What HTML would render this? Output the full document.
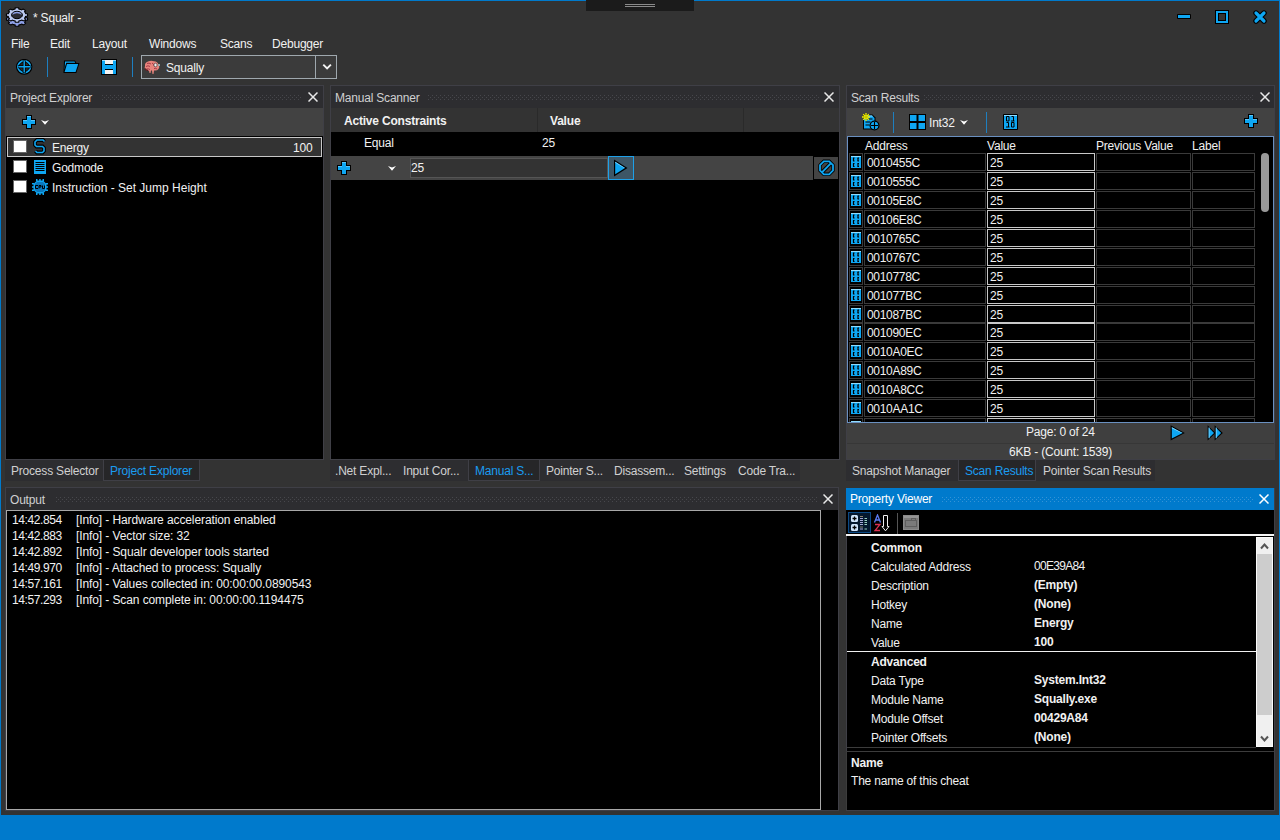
<!DOCTYPE html>
<html><head><meta charset="utf-8">
<style>
*{box-sizing:border-box}
html,body{margin:0;padding:0}
body{width:1280px;height:840px;background:#333333;position:relative;overflow:hidden;font-family:"Liberation Sans",sans-serif;font-size:12px;color:#f1f1f1}
.a{position:absolute}
.t{position:absolute;white-space:nowrap;line-height:16px;height:16px;letter-spacing:-0.2px}
.b{font-weight:bold}
.hdr{position:absolute;background:#2d2d30;height:22px}
.grip{position:absolute;height:5px;background-image:radial-gradient(circle,#46464a 0.8px,transparent 1px);background-size:4px 4px}
.x{position:absolute;width:10px;height:10px}
.blk{position:absolute;background:#000}
.cell{position:absolute;border:1px solid #3a3a3a;height:18px}
.vcell{position:absolute;border:1px solid #c8c8c8;height:18px}
.ts{letter-spacing:-0.4px}
.hx{letter-spacing:-0.3px}
.tabs{position:absolute;height:21px;background:#2d2d30}
</style></head>
<body>
<svg width="0" height="0" style="position:absolute"><defs>
<pattern id="gp" width="4" height="4" patternUnits="userSpaceOnUse"><rect x="0" y="0" width="1" height="1" fill="#47474c"/><rect x="2" y="2" width="1" height="1" fill="#47474c"/></pattern>
<pattern id="gpb" width="4" height="4" patternUnits="userSpaceOnUse"><rect x="0" y="0" width="1" height="1" fill="#3593d6"/><rect x="2" y="2" width="1" height="1" fill="#3593d6"/></pattern>
</defs></svg>
<!-- window border -->
<div class="a" style="left:0;top:0;width:1280px;height:1px;background:#007acc"></div>
<div class="a" style="left:0;top:0;width:1px;height:815px;background:#007acc"></div>
<div class="a" style="left:1279px;top:0;width:1px;height:815px;background:#007acc"></div>
<div class="a" style="left:0;top:815px;width:1280px;height:25px;background:#007acc"></div>
<!-- grip -->
<div class="a" style="left:586px;top:0;width:108px;height:11px;background:#1b1b1b"></div>
<div class="a" style="left:625px;top:4px;width:30px;height:1px;background:#8a8a8a"></div>
<div class="a" style="left:625px;top:6px;width:30px;height:1px;background:#8a8a8a"></div>

<!-- title -->
<svg class="a" style="left:0px;top:0px" width="32" height="32" viewBox="0 0 32 32">
<g transform="translate(0,4)"><polygon points="15.14,7.91 15.65,7.86 16.17,7.82 16.69,7.80 17.21,7.80 17.73,7.82 18.25,7.85 18.76,7.90 18.91,9.09 19.33,9.16 19.75,9.25 20.16,9.35 20.57,9.46 20.96,9.58 21.35,9.72 21.73,9.87 23.06,9.09 23.48,9.30 23.88,9.53 24.27,9.76 24.64,10.01 24.99,10.27 25.32,10.54 25.64,10.83 24.50,11.74 24.73,11.99 24.93,12.25 25.12,12.52 25.29,12.80 25.44,13.07 25.57,13.36 25.68,13.65 27.43,13.73 27.51,14.08 27.57,14.44 27.60,14.79 27.60,15.14 27.57,15.49 27.53,15.85 27.45,16.20 25.70,16.30 25.59,16.58 25.47,16.87 25.32,17.15 25.16,17.42 24.97,17.69 24.77,17.96 24.55,18.21 25.70,19.12 25.39,19.40 25.06,19.68 24.71,19.94 24.35,20.19 23.96,20.43 23.56,20.65 23.15,20.87 21.80,20.09 21.43,20.25 21.04,20.39 20.65,20.52 20.25,20.63 19.83,20.73 19.42,20.82 18.99,20.89 18.86,22.09 18.35,22.14 17.83,22.18 17.31,22.20 16.79,22.20 16.27,22.18 15.75,22.15 15.24,22.10 15.09,20.91 14.67,20.84 14.25,20.75 13.84,20.65 13.43,20.54 13.04,20.42 12.65,20.28 12.27,20.13 10.94,20.91 10.52,20.70 10.12,20.47 9.73,20.24 9.36,19.99 9.01,19.73 8.68,19.46 8.36,19.17 9.50,18.26 9.27,18.01 9.07,17.75 8.88,17.48 8.71,17.20 8.56,16.93 8.43,16.64 8.32,16.35 6.57,16.27 6.49,15.92 6.43,15.56 6.40,15.21 6.40,14.86 6.43,14.51 6.47,14.15 6.55,13.80 8.30,13.70 8.41,13.42 8.53,13.13 8.68,12.85 8.84,12.58 9.03,12.31 9.23,12.04 9.45,11.79 8.30,10.88 8.61,10.60 8.94,10.32 9.29,10.06 9.65,9.81 10.04,9.57 10.44,9.35 10.85,9.13 12.20,9.91 12.57,9.75 12.96,9.61 13.35,9.48 13.75,9.37 14.17,9.27 14.58,9.18 15.01,9.11" fill="#8d9fe6" stroke="#000" stroke-width="1.1" stroke-linejoin="round"/></g>
<polygon points="15.14,7.91 15.65,7.86 16.17,7.82 16.69,7.80 17.21,7.80 17.73,7.82 18.25,7.85 18.76,7.90 18.91,9.09 19.33,9.16 19.75,9.25 20.16,9.35 20.57,9.46 20.96,9.58 21.35,9.72 21.73,9.87 23.06,9.09 23.48,9.30 23.88,9.53 24.27,9.76 24.64,10.01 24.99,10.27 25.32,10.54 25.64,10.83 24.50,11.74 24.73,11.99 24.93,12.25 25.12,12.52 25.29,12.80 25.44,13.07 25.57,13.36 25.68,13.65 27.43,13.73 27.51,14.08 27.57,14.44 27.60,14.79 27.60,15.14 27.57,15.49 27.53,15.85 27.45,16.20 25.70,16.30 25.59,16.58 25.47,16.87 25.32,17.15 25.16,17.42 24.97,17.69 24.77,17.96 24.55,18.21 25.70,19.12 25.39,19.40 25.06,19.68 24.71,19.94 24.35,20.19 23.96,20.43 23.56,20.65 23.15,20.87 21.80,20.09 21.43,20.25 21.04,20.39 20.65,20.52 20.25,20.63 19.83,20.73 19.42,20.82 18.99,20.89 18.86,22.09 18.35,22.14 17.83,22.18 17.31,22.20 16.79,22.20 16.27,22.18 15.75,22.15 15.24,22.10 15.09,20.91 14.67,20.84 14.25,20.75 13.84,20.65 13.43,20.54 13.04,20.42 12.65,20.28 12.27,20.13 10.94,20.91 10.52,20.70 10.12,20.47 9.73,20.24 9.36,19.99 9.01,19.73 8.68,19.46 8.36,19.17 9.50,18.26 9.27,18.01 9.07,17.75 8.88,17.48 8.71,17.20 8.56,16.93 8.43,16.64 8.32,16.35 6.57,16.27 6.49,15.92 6.43,15.56 6.40,15.21 6.40,14.86 6.43,14.51 6.47,14.15 6.55,13.80 8.30,13.70 8.41,13.42 8.53,13.13 8.68,12.85 8.84,12.58 9.03,12.31 9.23,12.04 9.45,11.79 8.30,10.88 8.61,10.60 8.94,10.32 9.29,10.06 9.65,9.81 10.04,9.57 10.44,9.35 10.85,9.13 12.20,9.91 12.57,9.75 12.96,9.61 13.35,9.48 13.75,9.37 14.17,9.27 14.58,9.18 15.01,9.11" fill="#bccaf2" stroke="#000" stroke-width="1.1" stroke-linejoin="round"/>
<ellipse cx="17" cy="15" rx="5.4" ry="3.7" fill="#2a2a33" stroke="#000" stroke-width="1"/>
<path d="M12.3 15Q12.8 11.8 17 11.7Q21.2 11.8 21.7 15Q20 13.3 17 13.3Q14 13.3 12.3 15z" fill="#8d9fe6"/>
</svg>
<div class="t" style="left:33px;top:10px">* Squalr -</div>
<!-- window buttons -->
<div class="a" style="left:1177px;top:14px;width:14px;height:5px;background:#000;border-radius:1px"></div>
<div class="a" style="left:1178px;top:15px;width:12px;height:3px;background:#0ea6f2"></div>
<div class="a" style="left:1215px;top:10px;width:14px;height:14px;border:1px solid #000;background:#000"></div>
<div class="a" style="left:1216px;top:11px;width:12px;height:12px;border:2px solid #0ea6f2;background:transparent"></div>
<div class="a" style="left:1218px;top:13px;width:8px;height:8px;border:1px solid #000;background:#333"></div>
<svg class="a" style="left:1253px;top:10px" width="14" height="14" viewBox="0 0 14 14">
<path d="M3 3L11 11M11 3L3 11" stroke="#000" stroke-width="5.4" stroke-linecap="round"/>
<path d="M3 3L11 11M11 3L3 11" stroke="#0ea6f2" stroke-width="3.2" stroke-linecap="round"/>
</svg>

<!-- menu -->
<div class="t" style="left:11px;top:36px">File</div>
<div class="t" style="left:50px;top:36px">Edit</div>
<div class="t" style="left:92px;top:36px">Layout</div>
<div class="t" style="left:149px;top:36px">Windows</div>
<div class="t" style="left:220px;top:36px">Scans</div>
<div class="t" style="left:272px;top:36px">Debugger</div>

<!-- toolbar -->
<svg class="a" style="left:16px;top:59px" width="17" height="16" viewBox="0 0 17 16">
<ellipse cx="8.2" cy="7.8" rx="7.6" ry="7.3" fill="#2a2a2a" stroke="#000" stroke-width="1.2"/>
<ellipse cx="8.2" cy="7.8" rx="6.2" ry="5.9" fill="none" stroke="#0ea6f2" stroke-width="1.8"/>
<ellipse cx="8.2" cy="7.8" rx="5" ry="4.7" fill="none" stroke="#000" stroke-width="0.8"/>
<path d="M8.2 1.5V14M2 7.8H14.5" stroke="#000" stroke-width="3"/>
<path d="M8.2 2V13.6M2.3 7.8H14.1" stroke="#0ea6f2" stroke-width="1.4"/>
</svg>
<div class="a" style="left:47px;top:57px;width:1px;height:20px;background:#1e7fc0"></div>
<svg class="a" style="left:63px;top:60px" width="17" height="14" viewBox="0 0 17 14">
<path d="M1 0.5h11l1.5 2.5H4L1.5 12.5H0.5z" fill="#000"/>
<path d="M2 1.5h9.5l0.8 1.3H3.3L1.6 10z" fill="#0ea6f2"/>
<path d="M3.2 3h13.3l-3.2 10H0.5z" fill="#000"/>
<path d="M4 4h11.2l-2.6 8H1.6z" fill="#0ea6f2"/>
</svg>
<svg class="a" style="left:101px;top:59px" width="16" height="16" viewBox="0 0 16 16" shape-rendering="crispEdges">
<rect x="0" y="0" width="16" height="16" fill="#000"/>
<rect x="1" y="1" width="14" height="14" fill="#0ea6f2"/>
<rect x="4" y="1" width="8" height="4" fill="#f4f4f4"/>
<rect x="4" y="5" width="8" height="1" fill="#000"/>
<rect x="4" y="10" width="8" height="1" fill="#000"/>
<rect x="4" y="11" width="8" height="4" fill="#f4f4f4"/>
<rect x="1" y="1" width="3" height="1" fill="#8fdcff"/><rect x="12" y="1" width="3" height="1" fill="#8fdcff"/>
</svg>
<div class="a" style="left:132px;top:57px;width:1px;height:20px;background:#1e7fc0"></div>
<div class="a" style="left:141px;top:55px;width:196px;height:24px;border:1px solid #9fa8ae;background:#3b3b3b"></div>
<div class="a" style="left:315px;top:56px;width:1px;height:22px;background:#9fa8ae"></div>
<svg class="a" style="left:143px;top:60px" width="18" height="15" viewBox="0 0 18 15">
<path d="M2 6Q1.5 2.5 5 1.5Q8 0 11 1.2Q14.5 1.5 15.5 4.5Q17 6.5 15.5 9Q14 11 11 10.5L10.5 14H9.5L9 10.5L8 10.5L7.5 13H6.5L6 10.5Q3.5 11 2.5 9.5Q1 8 2 6z" fill="#e8847c"/>
<path d="M3 6.5Q5 5 7 6.5M4 3.5Q6 2.5 8 4M9 3Q11 4 11.5 6.5M3.5 9Q5.5 8.5 7 9.5M11 8.5Q13 8 14 9" stroke="#a83a4a" stroke-width="1" fill="none"/>
<path d="M2 8.5Q3 10.5 5 10.5" stroke="#5a1a20" stroke-width="1.5" fill="none"/>
<ellipse cx="12.5" cy="5" rx="1.6" ry="1.8" fill="#f0f0f0" stroke="#333" stroke-width="0.6"/>
<rect x="15" y="4" width="2" height="2" fill="#9aa"/>
</svg>
<div class="t" style="left:166px;top:60px">Squally</div>
<svg class="a" style="left:322px;top:63px" width="11" height="8" viewBox="0 0 11 8"><path d="M1.3 1.6L5.1 5.4L8.9 1.6" stroke="#f4f4f4" stroke-width="1.9" fill="none"/></svg>

<!-- ============ PROJECT EXPLORER ============ -->
<div class="a" style="left:5px;top:85px;width:319px;height:375px;border:1px solid #3f3f46;border-bottom:none;background:#000"></div>
<div class="hdr" style="left:6px;top:86px;width:317px"></div>
<div class="t" style="left:10px;top:90px;color:#d0d0d0">Project Explorer</div>
<svg class="a" style="left:102px;top:95px" width="200" height="5"><rect width="200" height="5" fill="url(#gp)"/></svg>
<svg class="x" style="left:308px;top:92px" viewBox="0 0 10 10"><path d="M0.5 0.5L9.5 9.5M9.5 0.5L0.5 9.5" stroke="#e8e8e8" stroke-width="1.5"/></svg>
<div class="a" style="left:6px;top:108px;width:317px;height:28px;background:#424242"></div>
<svg class="a" style="left:22px;top:115px" width="14" height="14" viewBox="0 0 14 14">
<path d="M4 0h6v4h4v6h-4v4H4v-4H0V4h4z" fill="#000"/>
<path d="M5 1h4v4h4v4H9v4H5V9H1V5h4z" fill="#0ea6f2"/>
<path d="M5 1h4v0.8H5zM1 5h4v0.8H1zM9 5h4v0.8H9z" fill="#6fd0ff"/>
</svg>
<svg class="a" style="left:41px;top:120px" width="8" height="5" viewBox="0 0 8 5"><path d="M0 0L4 1.6L8 0L4 4.8z" fill="#fff"/></svg>

<div class="a" style="left:7px;top:137px;width:315px;height:20px;border:1px solid #c8c8c8;background:#333"></div>
<div class="a" style="left:13px;top:140px;width:14px;height:13px;background:#fff;border:1px solid #666"></div>
<div class="a" style="left:13px;top:160px;width:14px;height:13px;background:#fff;border:1px solid #666"></div>
<div class="a" style="left:13px;top:180px;width:14px;height:13px;background:#fff;border:1px solid #666"></div>
<svg class="a" style="left:33px;top:138px" width="14" height="18" viewBox="0 0 14 18">
<path d="M11.5 3.5L10 2H4L2 4V7L3.5 8.5H9.5L11 10V13L9.5 14.5H4L2.5 13" stroke="#000" stroke-width="3.8" fill="none" stroke-linejoin="miter"/>
<path d="M11.5 3.5L10 2H4L2 4V7L3.5 8.5H9.5L11 10V13L9.5 14.5H4L2.5 13" stroke="#0ea6f2" stroke-width="1.6" fill="none"/>
</svg>
<div class="t" style="left:52px;top:140px">Energy</div>
<div class="t" style="left:293px;top:140px">100</div>
<svg class="a" style="left:34px;top:160px" width="12" height="14" viewBox="0 0 12 14">
<rect x="0" y="0" width="12" height="14" fill="#0ea6f2"/>
<path d="M1.5 2.5h9M1.5 4.5h9M1.5 6.5h9M1.5 8.5h9M1.5 10.5h9" stroke="#000" stroke-width="1"/>
</svg>
<div class="t" style="left:52px;top:160px">Godmode</div>
<svg class="a" style="left:32px;top:179px" width="16" height="16" viewBox="0 0 16 16">
<path d="M4 0h1.5v2H4zM7.2 0h1.5v2H7.2zM10.5 0H12v2h-1.5zM4 14h1.5v2H4zM7.2 14h1.5v2H7.2zM10.5 14H12v2h-1.5zM0 4h2v1.5H0zM0 7.2h2v1.5H0zM0 10.5h2V12H0zM14 4h2v1.5h-2zM14 7.2h2v1.5h-2zM14 10.5h2V12h-2z" fill="#0ea6f2"/>
<path d="M5 1.5h6L14.5 5v6L11 14.5H5L1.5 11V5z" fill="#0ea6f2"/>
<path d="M5 3h6L13 5v6L11 13H5L3 11V5z" fill="#0a78bd"/>
<path d="M3.5 6.5h2.5M3.5 6.5v3h2.5M7 9.5v-3h2v1.5H7M10.5 6.5v3h2v-3" stroke="#000" stroke-width="1" fill="none"/>
</svg>
<div class="t" style="left:52px;top:180px;letter-spacing:0">Instruction - Set Jump Height</div>

<!-- tabs left -->
<div class="a" style="left:5px;top:459px;width:319px;height:1px;background:#3f3f46"></div>
<div class="tabs" style="left:5px;top:460px;width:98px"></div>
<div class="a" style="left:103px;top:460px;width:97px;height:21px;background:#262628;border:1px solid #3f3f46;border-top:none"></div>
<div class="t" style="left:11px;top:463px;color:#d0d0d0">Process Selector</div>
<div class="t" style="left:110px;top:463px;color:#1a9cf0">Project Explorer</div>

<!-- ============ MANUAL SCANNER ============ -->
<div class="a" style="left:330px;top:85px;width:510px;height:375px;border:1px solid #3f3f46;border-bottom:none;background:#000"></div>
<div class="hdr" style="left:331px;top:86px;width:508px"></div>
<div class="t" style="left:335px;top:90px;color:#d0d0d0">Manual Scanner</div>
<svg class="a" style="left:428px;top:95px" width="391" height="5"><rect width="391" height="5" fill="url(#gp)"/></svg>
<svg class="x" style="left:824px;top:92px" viewBox="0 0 10 10"><path d="M0.5 0.5L9.5 9.5M9.5 0.5L0.5 9.5" stroke="#e8e8e8" stroke-width="1.5"/></svg>
<div class="a" style="left:331px;top:108px;width:508px;height:24px;background:#333"></div>
<div class="a" style="left:537px;top:108px;width:1px;height:24px;background:#2a2a2a"></div>
<div class="a" style="left:743px;top:108px;width:1px;height:24px;background:#2a2a2a"></div>
<div class="t b" style="left:344px;top:113px">Active Constraints</div>
<div class="t b" style="left:550px;top:113px">Value</div>
<div class="t" style="left:364px;top:135px">Equal</div>
<div class="t" style="left:542px;top:135px">25</div>
<div class="a" style="left:331px;top:156px;width:482px;height:24px;background:#444"></div>
<svg class="a" style="left:337px;top:161px" width="14" height="14" viewBox="0 0 14 14">
<path d="M4 0h6v4h4v6h-4v4H4v-4H0V4h4z" fill="#000"/>
<path d="M5 1h4v4h4v4H9v4H5V9H1V5h4z" fill="#0ea6f2"/>
<path d="M5 1h4v0.8H5zM1 5h4v0.8H1zM9 5h4v0.8H9z" fill="#6fd0ff"/>
</svg>
<svg class="a" style="left:388px;top:166px" width="8" height="5" viewBox="0 0 8 5"><path d="M0 0L4 1.6L8 0L4 4.8z" fill="#fff"/></svg>
<div class="a" style="left:410px;top:158px;width:198px;height:20px;background:#333;border:1px solid #555"></div>
<div class="t" style="left:411px;top:160px">25</div>
<div class="a" style="left:608px;top:156px;width:26px;height:24px;background:#3d5666;border:1px solid #1ea0e8"></div>
<svg class="a" style="left:612px;top:159px" width="18" height="18" viewBox="0 0 18 18">
<path d="M2 0.5L15.5 9L2 17.5z" fill="#000"/>
<path d="M3.2 2.8L13 9L3.2 15.2z" fill="#0ea6f2"/>
<path d="M3.2 2.8L13 9L12 9L3.2 3.8z" fill="#7fd6ff"/>
</svg>
<div class="a" style="left:814px;top:157px;width:24px;height:22px;background:#444"></div>
<svg class="a" style="left:817px;top:159px" width="19" height="18" viewBox="0 0 19 18">
<path d="M6.8 2.3H12.2L16 6.1V11.5L12.2 15.3H6.8L3 11.5V6.1z" fill="none" stroke="#000" stroke-width="3.4"/>
<path d="M5.2 13.2L13.8 4.4" stroke="#000" stroke-width="3.8"/>
<path d="M6.8 2.3H12.2L16 6.1V11.5L12.2 15.3H6.8L3 11.5V6.1z" fill="none" stroke="#0ea6f2" stroke-width="1.8"/>
<path d="M5.2 13.2L13.8 4.4" stroke="#0ea6f2" stroke-width="1.9"/>
</svg>

<!-- tabs manual -->
<div class="a" style="left:330px;top:459px;width:510px;height:1px;background:#3f3f46"></div>
<div class="tabs" style="left:330px;top:460px;width:470px"></div>
<div class="a" style="left:468px;top:460px;width:72px;height:21px;background:#262628;border:1px solid #3f3f46;border-top:none"></div>
<div class="t" style="left:335px;top:463px;color:#d0d0d0">.Net Expl...</div>
<div class="t" style="left:403px;top:463px;color:#d0d0d0">Input Cor...</div>
<div class="t" style="left:475px;top:463px;color:#1a9cf0">Manual S...</div>
<div class="t" style="left:546px;top:463px;color:#d0d0d0">Pointer S...</div>
<div class="t" style="left:614px;top:463px;color:#d0d0d0">Disassem...</div>
<div class="t" style="left:684px;top:463px;color:#d0d0d0">Settings</div>
<div class="t" style="left:738px;top:463px;color:#d0d0d0">Code Tra...</div>

<!-- ============ SCAN RESULTS ============ -->
<div class="a" style="left:846px;top:85px;width:429px;height:375px;border:1px solid #3f3f46;border-bottom:none;background:#333"></div>
<div class="hdr" style="left:847px;top:86px;width:427px"></div>
<div class="t" style="left:851px;top:90px;color:#d0d0d0">Scan Results</div>
<svg class="a" style="left:924px;top:95px" width="329" height="5"><rect width="329" height="5" fill="url(#gp)"/></svg>
<svg class="x" style="left:1260px;top:92px" viewBox="0 0 10 10"><path d="M0.5 0.5L9.5 9.5M9.5 0.5L0.5 9.5" stroke="#e8e8e8" stroke-width="1.5"/></svg>
<div class="a" style="left:847px;top:108px;width:427px;height:28px;background:#424242"></div>
<svg class="a" style="left:860px;top:111px" width="21" height="21" viewBox="0 0 21 21">
<path d="M3 3.5h9.5l3 3V18.5H3z" fill="#000"/>
<path d="M4 4.5h8l2.5 2.5V17.5H4z" fill="#0ea6f2"/>
<path d="M4 4.5h8l1 1H4z" fill="#8fdcff"/>
<path d="M5.5 8h7M5.5 11h5M5.5 14h4" stroke="#000" stroke-width="1.2"/>
<circle cx="14.5" cy="14.5" r="5" fill="#000"/>
<circle cx="14.5" cy="14.5" r="3.8" fill="#0ea6f2"/>
<path d="M11 14.5h7M14.5 11v7" stroke="#000" stroke-width="1.1"/>
<path d="M6 2v8M2 6h8M3.2 3.2l5.6 5.6M8.8 3.2l-5.6 5.6" stroke="#f2f000" stroke-width="1.3"/>
<circle cx="6" cy="6" r="1.8" fill="#c8c800"/>
</svg>
<div class="a" style="left:893px;top:112px;width:1px;height:21px;background:#1e7fc0"></div>
<svg class="a" style="left:909px;top:114px" width="17" height="16" viewBox="0 0 17 16">
<rect x="0" y="0" width="17" height="16" fill="#000"/>
<rect x="1" y="1" width="6.5" height="6" fill="#0ea6f2"/><rect x="9.5" y="1" width="6.5" height="6" fill="#0ea6f2"/>
<rect x="1" y="9" width="6.5" height="6" fill="#0ea6f2"/><rect x="9.5" y="9" width="6.5" height="6" fill="#0ea6f2"/>
</svg>
<div class="t" style="left:929px;top:115px">Int32</div>
<svg class="a" style="left:960px;top:120px" width="8" height="5" viewBox="0 0 8 5"><path d="M0 0L4 1.6L8 0L4 4.8z" fill="#fff"/></svg>
<div class="a" style="left:986px;top:112px;width:1px;height:21px;background:#1e7fc0"></div>
<svg class="a" style="left:1003px;top:114px" width="15" height="16" viewBox="0 0 15 16">
<rect x="0" y="0" width="15" height="16" rx="1" fill="#000"/>
<rect x="1" y="1" width="13" height="14" fill="#0ea6f2"/>
<rect x="1" y="1" width="13" height="1" fill="#8fdcff"/>
<path d="M3.5 2.5h2.5v4.5H3.5z" fill="none" stroke="#000" stroke-width="1"/>
<path d="M8.5 2.5h2v4.5M8 7h3.5" fill="none" stroke="#000" stroke-width="1"/>
<path d="M3.5 8.5h2v4.5M3 13h3.5" fill="none" stroke="#000" stroke-width="1"/>
<path d="M8.5 8.5h2.5v4.5H8.5z" fill="none" stroke="#000" stroke-width="1"/>
</svg>
<svg class="a" style="left:1244px;top:114px" width="14" height="14" viewBox="0 0 14 14">
<path d="M4 0h6v4h4v6h-4v4H4v-4H0V4h4z" fill="#000"/>
<path d="M5 1h4v4h4v4H9v4H5V9H1V5h4z" fill="#0ea6f2"/>
<path d="M5 1h4v0.8H5zM1 5h4v0.8H1zM9 5h4v0.8H9z" fill="#6fd0ff"/>
</svg>

<div class="a" style="left:847px;top:136px;width:427px;height:287px;border:1px solid #6a90c0;background:#000"></div>
<div class="t" style="left:865px;top:138px">Address</div>
<div class="t" style="left:987px;top:138px">Value</div>
<div class="t" style="left:1096px;top:138px">Previous Value</div>
<div class="t" style="left:1192px;top:138px">Label</div>
<div style="position:absolute;left:0;top:0;width:1274px;height:422px;overflow:hidden">
<div class="cell" style="left:849px;top:153px;width:14px"></div>
<svg class="a" style="left:851px;top:156px" width="10" height="12" viewBox="0 0 10 12"><rect width="10" height="12" fill="#0ea6f2"/><rect width="10" height="1" fill="#8fdcff"/><path d="M2.5 2v3M7 2v3M2.5 7.5v3M7 7.5v3" stroke="#000" stroke-width="1.2"/><path d="M2 2h1.5M6.5 2h1.5M2 5h1.5M6.5 5h1.5M2 7.5h1.5M6.5 7.5h1.5M2 10.5h1.5M6.5 10.5h1.5" stroke="#000" stroke-width="1"/></svg>
<div class="cell" style="left:864px;top:153px;width:122px"></div>
<div class="vcell" style="left:987px;top:153px;width:108px"></div>
<div class="cell" style="left:1096px;top:153px;width:95px"></div>
<div class="cell" style="left:1192px;top:153px;width:63px"></div>
<div class="t hx" style="left:867px;top:155px">0010455C</div><div class="t" style="left:990px;top:155px">25</div>
<div class="cell" style="left:849px;top:172px;width:14px"></div>
<svg class="a" style="left:851px;top:175px" width="10" height="12" viewBox="0 0 10 12"><rect width="10" height="12" fill="#0ea6f2"/><rect width="10" height="1" fill="#8fdcff"/><path d="M2.5 2v3M7 2v3M2.5 7.5v3M7 7.5v3" stroke="#000" stroke-width="1.2"/><path d="M2 2h1.5M6.5 2h1.5M2 5h1.5M6.5 5h1.5M2 7.5h1.5M6.5 7.5h1.5M2 10.5h1.5M6.5 10.5h1.5" stroke="#000" stroke-width="1"/></svg>
<div class="cell" style="left:864px;top:172px;width:122px"></div>
<div class="vcell" style="left:987px;top:172px;width:108px"></div>
<div class="cell" style="left:1096px;top:172px;width:95px"></div>
<div class="cell" style="left:1192px;top:172px;width:63px"></div>
<div class="t hx" style="left:867px;top:174px">0010555C</div><div class="t" style="left:990px;top:174px">25</div>
<div class="cell" style="left:849px;top:191px;width:14px"></div>
<svg class="a" style="left:851px;top:194px" width="10" height="12" viewBox="0 0 10 12"><rect width="10" height="12" fill="#0ea6f2"/><rect width="10" height="1" fill="#8fdcff"/><path d="M2.5 2v3M7 2v3M2.5 7.5v3M7 7.5v3" stroke="#000" stroke-width="1.2"/><path d="M2 2h1.5M6.5 2h1.5M2 5h1.5M6.5 5h1.5M2 7.5h1.5M6.5 7.5h1.5M2 10.5h1.5M6.5 10.5h1.5" stroke="#000" stroke-width="1"/></svg>
<div class="cell" style="left:864px;top:191px;width:122px"></div>
<div class="vcell" style="left:987px;top:191px;width:108px"></div>
<div class="cell" style="left:1096px;top:191px;width:95px"></div>
<div class="cell" style="left:1192px;top:191px;width:63px"></div>
<div class="t hx" style="left:867px;top:193px">00105E8C</div><div class="t" style="left:990px;top:193px">25</div>
<div class="cell" style="left:849px;top:210px;width:14px"></div>
<svg class="a" style="left:851px;top:213px" width="10" height="12" viewBox="0 0 10 12"><rect width="10" height="12" fill="#0ea6f2"/><rect width="10" height="1" fill="#8fdcff"/><path d="M2.5 2v3M7 2v3M2.5 7.5v3M7 7.5v3" stroke="#000" stroke-width="1.2"/><path d="M2 2h1.5M6.5 2h1.5M2 5h1.5M6.5 5h1.5M2 7.5h1.5M6.5 7.5h1.5M2 10.5h1.5M6.5 10.5h1.5" stroke="#000" stroke-width="1"/></svg>
<div class="cell" style="left:864px;top:210px;width:122px"></div>
<div class="vcell" style="left:987px;top:210px;width:108px"></div>
<div class="cell" style="left:1096px;top:210px;width:95px"></div>
<div class="cell" style="left:1192px;top:210px;width:63px"></div>
<div class="t hx" style="left:867px;top:212px">00106E8C</div><div class="t" style="left:990px;top:212px">25</div>
<div class="cell" style="left:849px;top:229px;width:14px"></div>
<svg class="a" style="left:851px;top:232px" width="10" height="12" viewBox="0 0 10 12"><rect width="10" height="12" fill="#0ea6f2"/><rect width="10" height="1" fill="#8fdcff"/><path d="M2.5 2v3M7 2v3M2.5 7.5v3M7 7.5v3" stroke="#000" stroke-width="1.2"/><path d="M2 2h1.5M6.5 2h1.5M2 5h1.5M6.5 5h1.5M2 7.5h1.5M6.5 7.5h1.5M2 10.5h1.5M6.5 10.5h1.5" stroke="#000" stroke-width="1"/></svg>
<div class="cell" style="left:864px;top:229px;width:122px"></div>
<div class="vcell" style="left:987px;top:229px;width:108px"></div>
<div class="cell" style="left:1096px;top:229px;width:95px"></div>
<div class="cell" style="left:1192px;top:229px;width:63px"></div>
<div class="t hx" style="left:867px;top:231px">0010765C</div><div class="t" style="left:990px;top:231px">25</div>
<div class="cell" style="left:849px;top:248px;width:14px"></div>
<svg class="a" style="left:851px;top:251px" width="10" height="12" viewBox="0 0 10 12"><rect width="10" height="12" fill="#0ea6f2"/><rect width="10" height="1" fill="#8fdcff"/><path d="M2.5 2v3M7 2v3M2.5 7.5v3M7 7.5v3" stroke="#000" stroke-width="1.2"/><path d="M2 2h1.5M6.5 2h1.5M2 5h1.5M6.5 5h1.5M2 7.5h1.5M6.5 7.5h1.5M2 10.5h1.5M6.5 10.5h1.5" stroke="#000" stroke-width="1"/></svg>
<div class="cell" style="left:864px;top:248px;width:122px"></div>
<div class="vcell" style="left:987px;top:248px;width:108px"></div>
<div class="cell" style="left:1096px;top:248px;width:95px"></div>
<div class="cell" style="left:1192px;top:248px;width:63px"></div>
<div class="t hx" style="left:867px;top:250px">0010767C</div><div class="t" style="left:990px;top:250px">25</div>
<div class="cell" style="left:849px;top:267px;width:14px"></div>
<svg class="a" style="left:851px;top:270px" width="10" height="12" viewBox="0 0 10 12"><rect width="10" height="12" fill="#0ea6f2"/><rect width="10" height="1" fill="#8fdcff"/><path d="M2.5 2v3M7 2v3M2.5 7.5v3M7 7.5v3" stroke="#000" stroke-width="1.2"/><path d="M2 2h1.5M6.5 2h1.5M2 5h1.5M6.5 5h1.5M2 7.5h1.5M6.5 7.5h1.5M2 10.5h1.5M6.5 10.5h1.5" stroke="#000" stroke-width="1"/></svg>
<div class="cell" style="left:864px;top:267px;width:122px"></div>
<div class="vcell" style="left:987px;top:267px;width:108px"></div>
<div class="cell" style="left:1096px;top:267px;width:95px"></div>
<div class="cell" style="left:1192px;top:267px;width:63px"></div>
<div class="t hx" style="left:867px;top:269px">0010778C</div><div class="t" style="left:990px;top:269px">25</div>
<div class="cell" style="left:849px;top:286px;width:14px"></div>
<svg class="a" style="left:851px;top:289px" width="10" height="12" viewBox="0 0 10 12"><rect width="10" height="12" fill="#0ea6f2"/><rect width="10" height="1" fill="#8fdcff"/><path d="M2.5 2v3M7 2v3M2.5 7.5v3M7 7.5v3" stroke="#000" stroke-width="1.2"/><path d="M2 2h1.5M6.5 2h1.5M2 5h1.5M6.5 5h1.5M2 7.5h1.5M6.5 7.5h1.5M2 10.5h1.5M6.5 10.5h1.5" stroke="#000" stroke-width="1"/></svg>
<div class="cell" style="left:864px;top:286px;width:122px"></div>
<div class="vcell" style="left:987px;top:286px;width:108px"></div>
<div class="cell" style="left:1096px;top:286px;width:95px"></div>
<div class="cell" style="left:1192px;top:286px;width:63px"></div>
<div class="t hx" style="left:867px;top:288px">001077BC</div><div class="t" style="left:990px;top:288px">25</div>
<div class="cell" style="left:849px;top:305px;width:14px"></div>
<svg class="a" style="left:851px;top:308px" width="10" height="12" viewBox="0 0 10 12"><rect width="10" height="12" fill="#0ea6f2"/><rect width="10" height="1" fill="#8fdcff"/><path d="M2.5 2v3M7 2v3M2.5 7.5v3M7 7.5v3" stroke="#000" stroke-width="1.2"/><path d="M2 2h1.5M6.5 2h1.5M2 5h1.5M6.5 5h1.5M2 7.5h1.5M6.5 7.5h1.5M2 10.5h1.5M6.5 10.5h1.5" stroke="#000" stroke-width="1"/></svg>
<div class="cell" style="left:864px;top:305px;width:122px"></div>
<div class="vcell" style="left:987px;top:305px;width:108px"></div>
<div class="cell" style="left:1096px;top:305px;width:95px"></div>
<div class="cell" style="left:1192px;top:305px;width:63px"></div>
<div class="t hx" style="left:867px;top:307px">001087BC</div><div class="t" style="left:990px;top:307px">25</div>
<div class="cell" style="left:849px;top:323px;width:14px"></div>
<svg class="a" style="left:851px;top:326px" width="10" height="12" viewBox="0 0 10 12"><rect width="10" height="12" fill="#0ea6f2"/><rect width="10" height="1" fill="#8fdcff"/><path d="M2.5 2v3M7 2v3M2.5 7.5v3M7 7.5v3" stroke="#000" stroke-width="1.2"/><path d="M2 2h1.5M6.5 2h1.5M2 5h1.5M6.5 5h1.5M2 7.5h1.5M6.5 7.5h1.5M2 10.5h1.5M6.5 10.5h1.5" stroke="#000" stroke-width="1"/></svg>
<div class="cell" style="left:864px;top:323px;width:122px"></div>
<div class="vcell" style="left:987px;top:323px;width:108px"></div>
<div class="cell" style="left:1096px;top:323px;width:95px"></div>
<div class="cell" style="left:1192px;top:323px;width:63px"></div>
<div class="t hx" style="left:867px;top:325px">001090EC</div><div class="t" style="left:990px;top:325px">25</div>
<div class="cell" style="left:849px;top:342px;width:14px"></div>
<svg class="a" style="left:851px;top:345px" width="10" height="12" viewBox="0 0 10 12"><rect width="10" height="12" fill="#0ea6f2"/><rect width="10" height="1" fill="#8fdcff"/><path d="M2.5 2v3M7 2v3M2.5 7.5v3M7 7.5v3" stroke="#000" stroke-width="1.2"/><path d="M2 2h1.5M6.5 2h1.5M2 5h1.5M6.5 5h1.5M2 7.5h1.5M6.5 7.5h1.5M2 10.5h1.5M6.5 10.5h1.5" stroke="#000" stroke-width="1"/></svg>
<div class="cell" style="left:864px;top:342px;width:122px"></div>
<div class="vcell" style="left:987px;top:342px;width:108px"></div>
<div class="cell" style="left:1096px;top:342px;width:95px"></div>
<div class="cell" style="left:1192px;top:342px;width:63px"></div>
<div class="t hx" style="left:867px;top:344px">0010A0EC</div><div class="t" style="left:990px;top:344px">25</div>
<div class="cell" style="left:849px;top:361px;width:14px"></div>
<svg class="a" style="left:851px;top:364px" width="10" height="12" viewBox="0 0 10 12"><rect width="10" height="12" fill="#0ea6f2"/><rect width="10" height="1" fill="#8fdcff"/><path d="M2.5 2v3M7 2v3M2.5 7.5v3M7 7.5v3" stroke="#000" stroke-width="1.2"/><path d="M2 2h1.5M6.5 2h1.5M2 5h1.5M6.5 5h1.5M2 7.5h1.5M6.5 7.5h1.5M2 10.5h1.5M6.5 10.5h1.5" stroke="#000" stroke-width="1"/></svg>
<div class="cell" style="left:864px;top:361px;width:122px"></div>
<div class="vcell" style="left:987px;top:361px;width:108px"></div>
<div class="cell" style="left:1096px;top:361px;width:95px"></div>
<div class="cell" style="left:1192px;top:361px;width:63px"></div>
<div class="t hx" style="left:867px;top:363px">0010A89C</div><div class="t" style="left:990px;top:363px">25</div>
<div class="cell" style="left:849px;top:380px;width:14px"></div>
<svg class="a" style="left:851px;top:383px" width="10" height="12" viewBox="0 0 10 12"><rect width="10" height="12" fill="#0ea6f2"/><rect width="10" height="1" fill="#8fdcff"/><path d="M2.5 2v3M7 2v3M2.5 7.5v3M7 7.5v3" stroke="#000" stroke-width="1.2"/><path d="M2 2h1.5M6.5 2h1.5M2 5h1.5M6.5 5h1.5M2 7.5h1.5M6.5 7.5h1.5M2 10.5h1.5M6.5 10.5h1.5" stroke="#000" stroke-width="1"/></svg>
<div class="cell" style="left:864px;top:380px;width:122px"></div>
<div class="vcell" style="left:987px;top:380px;width:108px"></div>
<div class="cell" style="left:1096px;top:380px;width:95px"></div>
<div class="cell" style="left:1192px;top:380px;width:63px"></div>
<div class="t hx" style="left:867px;top:382px">0010A8CC</div><div class="t" style="left:990px;top:382px">25</div>
<div class="cell" style="left:849px;top:399px;width:14px"></div>
<svg class="a" style="left:851px;top:402px" width="10" height="12" viewBox="0 0 10 12"><rect width="10" height="12" fill="#0ea6f2"/><rect width="10" height="1" fill="#8fdcff"/><path d="M2.5 2v3M7 2v3M2.5 7.5v3M7 7.5v3" stroke="#000" stroke-width="1.2"/><path d="M2 2h1.5M6.5 2h1.5M2 5h1.5M6.5 5h1.5M2 7.5h1.5M6.5 7.5h1.5M2 10.5h1.5M6.5 10.5h1.5" stroke="#000" stroke-width="1"/></svg>
<div class="cell" style="left:864px;top:399px;width:122px"></div>
<div class="vcell" style="left:987px;top:399px;width:108px"></div>
<div class="cell" style="left:1096px;top:399px;width:95px"></div>
<div class="cell" style="left:1192px;top:399px;width:63px"></div>
<div class="t hx" style="left:867px;top:401px">0010AA1C</div><div class="t" style="left:990px;top:401px">25</div>
<div class="cell" style="left:849px;top:418px;width:14px"></div>
<svg class="a" style="left:851px;top:421px" width="10" height="12" viewBox="0 0 10 12"><rect width="10" height="12" fill="#0ea6f2"/><rect width="10" height="1" fill="#8fdcff"/><path d="M2.5 2v3M7 2v3M2.5 7.5v3M7 7.5v3" stroke="#000" stroke-width="1.2"/><path d="M2 2h1.5M6.5 2h1.5M2 5h1.5M6.5 5h1.5M2 7.5h1.5M6.5 7.5h1.5M2 10.5h1.5M6.5 10.5h1.5" stroke="#000" stroke-width="1"/></svg>
<div class="cell" style="left:864px;top:418px;width:122px"></div>
<div class="vcell" style="left:987px;top:418px;width:108px"></div>
<div class="cell" style="left:1096px;top:418px;width:95px"></div>
<div class="cell" style="left:1192px;top:418px;width:63px"></div>
</div>
<div class="a" style="left:1261px;top:153px;width:8px;height:59px;background:#999;border-radius:4px"></div>

<div class="a" style="left:847px;top:423px;width:427px;height:20px;background:#3f3f3f"></div>
<div class="t" style="left:1026px;top:424px">Page: 0 of 24</div>
<svg class="a" style="left:1170px;top:425px" width="16" height="16" viewBox="0 0 16 16">
<path d="M0.6 0.2L14.8 7.9L0.6 15.6z" fill="#000"/>
<path d="M1.8 2.3L12.6 7.9L1.8 13.5z" fill="#0ea6f2"/>
<path d="M1.8 2.3L12.6 7.9L11.6 7.9L1.8 3.3z" fill="#8fdcff"/>
</svg>
<svg class="a" style="left:1207px;top:425px" width="18" height="16" viewBox="0 0 18 16">
<path d="M0.6 0.2L8.6 7.9L0.6 15.6z" fill="#000"/>
<path d="M7.6 0.2L15.8 7.9L7.6 15.6z" fill="#000"/>
<path d="M1.7 2.6L7 7.9L1.7 13.2z" fill="#0ea6f2"/>
<path d="M8.8 2.6L14.1 7.9L8.8 13.2z" fill="#0ea6f2"/>
<path d="M1.7 2.6h0.8v10.6h-0.8zM8.8 2.6h0.8v10.6h-0.8z" fill="#8fdcff"/>
</svg>
<div class="a" style="left:847px;top:443px;width:427px;height:1px;background:#373737"></div><div class="a" style="left:847px;top:444px;width:427px;height:15px;background:#404040"></div>
<div class="t" style="left:1009px;top:444px">6KB - (Count: 1539)</div>

<!-- tabs right -->
<div class="a" style="left:846px;top:459px;width:429px;height:1px;background:#3f3f46"></div>
<div class="tabs" style="left:846px;top:460px;width:309px"></div>
<div class="a" style="left:958px;top:460px;width:78px;height:21px;background:#262628;border:1px solid #3f3f46;border-top:none"></div>
<div class="t" style="left:852px;top:463px;color:#d0d0d0">Snapshot Manager</div>
<div class="t" style="left:965px;top:463px;color:#1a9cf0">Scan Results</div>
<div class="t" style="left:1043px;top:463px;color:#d0d0d0">Pointer Scan Results</div>

<!-- ============ OUTPUT ============ -->
<div class="a" style="left:5px;top:487px;width:834px;height:324px;border:1px solid #3f3f46;background:#000"></div>
<div class="hdr" style="left:6px;top:488px;width:832px"></div>
<div class="t" style="left:10px;top:492px;color:#d0d0d0">Output</div>
<svg class="a" style="left:56px;top:497px" width="762" height="5"><rect width="762" height="5" fill="url(#gp)"/></svg>
<svg class="x" style="left:823px;top:494px" viewBox="0 0 10 10"><path d="M0.5 0.5L9.5 9.5M9.5 0.5L0.5 9.5" stroke="#e8e8e8" stroke-width="1.5"/></svg>
<div class="a" style="left:6px;top:510px;width:815px;height:300px;border:1px solid #a8a8a8"></div>
<div class="t ts" style="left:12px;top:512px">14:42.854</div><div class="t" style="left:76px;top:512px;letter-spacing:-0.1px">[Info] - Hardware acceleration enabled</div>
<div class="t ts" style="left:12px;top:528px">14:42.883</div><div class="t" style="left:76px;top:528px;letter-spacing:-0.1px">[Info] - Vector size: 32</div>
<div class="t ts" style="left:12px;top:544px">14:42.892</div><div class="t" style="left:76px;top:544px;letter-spacing:-0.1px">[Info] - Squalr developer tools started</div>
<div class="t ts" style="left:12px;top:560px">14:49.970</div><div class="t" style="left:76px;top:560px;letter-spacing:-0.1px">[Info] - Attached to process: Squally</div>
<div class="t ts" style="left:12px;top:576px">14:57.161</div><div class="t" style="left:76px;top:576px;letter-spacing:-0.1px">[Info] - Values collected in: 00:00:00.0890543</div>
<div class="t ts" style="left:12px;top:592px">14:57.293</div><div class="t" style="left:76px;top:592px;letter-spacing:-0.1px">[Info] - Scan complete in: 00:00:00.1194475</div>

<!-- ============ PROPERTY VIEWER ============ -->
<div class="a" style="left:846px;top:488px;width:429px;height:323px;border:1px solid #3f3f46;background:#000"></div>
<div class="a" style="left:846px;top:488px;width:428px;height:22px;background:#007acc"></div>
<div class="t" style="left:850px;top:491px;color:#fff">Property Viewer</div>
<svg class="a" style="left:942px;top:497px" width="311" height="5"><rect width="311" height="5" fill="url(#gpb)"/></svg>
<svg class="x" style="left:1259px;top:494px" viewBox="0 0 10 10"><path d="M0.5 0.5L9.5 9.5M9.5 0.5L0.5 9.5" stroke="#fff" stroke-width="1.5"/></svg>
<div class="a" style="left:846px;top:510px;width:1px;height:24px;background:#000"></div>
<div class="a" style="left:848px;top:512px;width:23px;height:21px;background:#04182e;border:1px solid #0b4a86"></div>
<svg class="a" style="left:850px;top:514px" width="20" height="18" viewBox="0 0 20 18">
<rect x="1" y="1" width="7" height="7" rx="1.5" fill="#cfe4fa"/><rect x="1" y="10" width="7" height="7" rx="1.5" fill="#cfe4fa"/>
<path d="M2.5 4.5h4M4.5 2.5v4M2.5 13.5h4M4.5 11.5v4" stroke="#000" stroke-width="1.3"/>
<path d="M10 2.5h3" stroke="#8a8070" stroke-width="1"/>
<path d="M10 4.5h3M10 6.5h3M10 8.5h3M10 10.5h3M10 15h3" stroke="#a8a8d8" stroke-width="1"/>
<path d="M14.5 4.5h2.5M14.5 6.5h2.5M14.5 8.5h2.5M14.5 10.5h2.5M14.5 15h2.5" stroke="#9ad0c0" stroke-width="1"/>
<path d="M10 13h3" stroke="#8a8070" stroke-width="1"/>
</svg>
<svg class="a" style="left:873px;top:514px" width="19" height="19" viewBox="0 0 19 19">
<path d="M1.5 8.5L4.5 1L7.5 8.5M2.7 6h3.6" stroke="#5a7af0" stroke-width="1.3" fill="none"/>
<path d="M2 10.5h5L2 16.5h5" stroke="#d83050" stroke-width="1.3" fill="none"/>
<path d="M10.5 1.5V12.5H9L12.5 16.8L16 12.5H14.5V1.5z" stroke="#f0f0f0" stroke-width="1" fill="none"/>
</svg>
<div class="a" style="left:897px;top:513px;width:1px;height:21px;background:#555"></div>
<div class="a" style="left:903px;top:515px;width:16px;height:15px;background:#7a7a7a;border:1px solid #8a8a8a"></div>
<div class="a" style="left:904px;top:516px;width:14px;height:2px;background:#959595"></div>
<div class="a" style="left:905px;top:520px;width:12px;height:7px;border:1px solid #5e5e5e"></div>
<div class="a" style="left:911px;top:518px;width:5px;height:3px;border:1px solid #5e5e5e"></div>
<div class="a" style="left:846px;top:534px;width:428px;height:2px;background:#f4f4f4"></div>
<div class="t b" style="left:871px;top:540px">Common</div>
<div class="t" style="left:871px;top:559px">Calculated Address</div><div class="t" style="left:1034px;top:558px;letter-spacing:-0.7px">00E39A84</div>
<div class="t" style="left:871px;top:578px">Description</div><div class="t b" style="left:1034px;top:577px">(Empty)</div>
<div class="t" style="left:871px;top:597px">Hotkey</div><div class="t b" style="left:1034px;top:596px">(None)</div>
<div class="t" style="left:871px;top:616px">Name</div><div class="t b" style="left:1034px;top:615px">Energy</div>
<div class="t" style="left:871px;top:635px">Value</div><div class="t b" style="left:1034px;top:634px">100</div>
<div class="a" style="left:847px;top:651px;width:409px;height:1px;background:#f0f0f0"></div>
<div class="t b" style="left:871px;top:654px">Advanced</div>
<div class="t" style="left:871px;top:673px">Data Type</div><div class="t b" style="left:1034px;top:672px">System.Int32</div>
<div class="t" style="left:871px;top:692px">Module Name</div><div class="t b" style="left:1034px;top:691px">Squally.exe</div>
<div class="t" style="left:871px;top:711px">Module Offset</div><div class="t b" style="left:1034px;top:710px">00429A84</div>
<div class="t" style="left:871px;top:730px">Pointer Offsets</div><div class="t b" style="left:1034px;top:729px">(None)</div>
<!-- scrollbar -->
<div class="a" style="left:1256px;top:537px;width:17px;height:210px;background:#f0f0f0;border:1px solid #fafafa"></div>
<div class="a" style="left:1257px;top:554px;width:15px;height:161px;background:#cdcdcd"></div>
<svg class="a" style="left:1260px;top:542px" width="9" height="8" viewBox="0 0 9 8"><path d="M1 6.5L4.5 2.5L8 6.5" stroke="#555" stroke-width="2" fill="none"/></svg>
<svg class="a" style="left:1260px;top:735px" width="9" height="8" viewBox="0 0 9 8"><path d="M1 1.5L4.5 5.5L8 1.5" stroke="#555" stroke-width="2" fill="none"/></svg>
<div class="a" style="left:847px;top:747px;width:409px;height:1px;background:#3c3c3c"></div>
<div class="a" style="left:847px;top:748px;width:427px;height:3px;background:#000"></div>
<div class="a" style="left:846px;top:751px;width:428px;height:59px;border:1px solid #3c3c3c;border-right:none;border-bottom:none"></div>
<div class="t b" style="left:851px;top:755px">Name</div>
<div class="t" style="left:851px;top:773px">The name of this cheat</div>


</body></html>
